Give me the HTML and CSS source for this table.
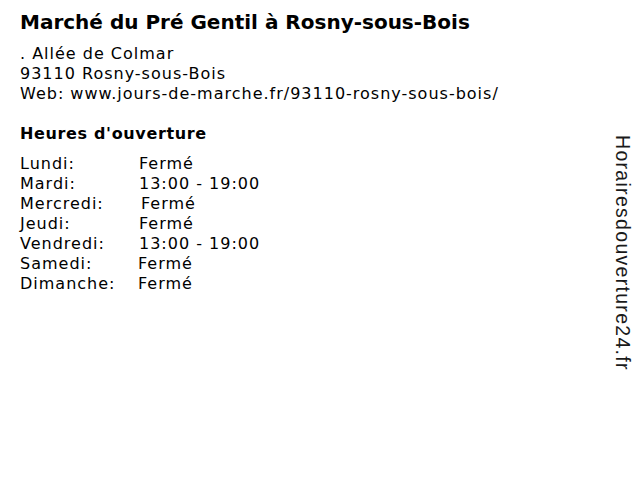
FILE: index.html
```html
<!DOCTYPE html>
<html lang="fr">
<head>
<meta charset="utf-8">
<link rel="stylesheet" href="styles.css">
</head>
<body>
<main class="page">
  <h1 class="title">Marché du Pré Gentil à Rosny-sous-Bois</h1>
  <div class="address">
    <div>. Allée de Colmar</div>
    <div>93110 Rosny-sous-Bois</div>
    <div>Web: www.jours-de-marche.fr/93110-rosny-sous-bois/</div>
  </div>
  <h2 class="subtitle">Heures d'ouverture</h2>
  <div class="hours">
    <span>Lundi:</span><span>Fermé</span>
    <span>Mardi:</span><span>13:00 - 19:00</span>
    <span>Mercredi:</span><span class="shift-r">Fermé</span>
    <span>Jeudi:</span><span>Fermé</span>
    <span>Vendredi:</span><span>13:00 - 19:00</span>
    <span>Samedi:</span><span class="shift-l">Fermé</span>
    <span>Dimanche:</span><span class="shift-l">Fermé</span>
  </div>
</main>
<div class="brand">Horairesdouverture24.fr</div>
</body>
</html>
```
FILE: styles.css
```css
html, body {
  margin: 0;
  padding: 0;
  background: #fff;
}
body {
  font-family: "DejaVu Sans", Verdana, sans-serif;
  color: #000;
  width: 640px;
  height: 480px;
  position: relative;
  overflow: hidden;
}
.page {
  padding: 9px 20px 0 20px;
}
.title {
  margin: 0;
  font-size: 20px;
  font-weight: bold;
  line-height: 26px;
}
.address {
  margin-top: 9px;
  font-size: 16px;
  line-height: 20px;
  letter-spacing: 1px;
}
.subtitle {
  margin: 19px 0 0 0;
  font-size: 16px;
  font-weight: bold;
  line-height: 22px;
  letter-spacing: 0.65px;
}
.hours {
  margin-top: 9px;
  display: grid;
  grid-template-columns: 119px auto;
  font-size: 16px;
  line-height: 20px;
  letter-spacing: 1px;
}
.shift-r { margin-left: 2px; }
.shift-l { margin-left: -1px; }
.brand {
  position: absolute;
  right: 7px;
  top: 135px;
  writing-mode: vertical-rl;
  font-family: "Liberation Sans", Arial, sans-serif;
  font-size: 19.5px;
  letter-spacing: 1.3px;
  color: #1a1a1a;
  line-height: 20px;
}
```
